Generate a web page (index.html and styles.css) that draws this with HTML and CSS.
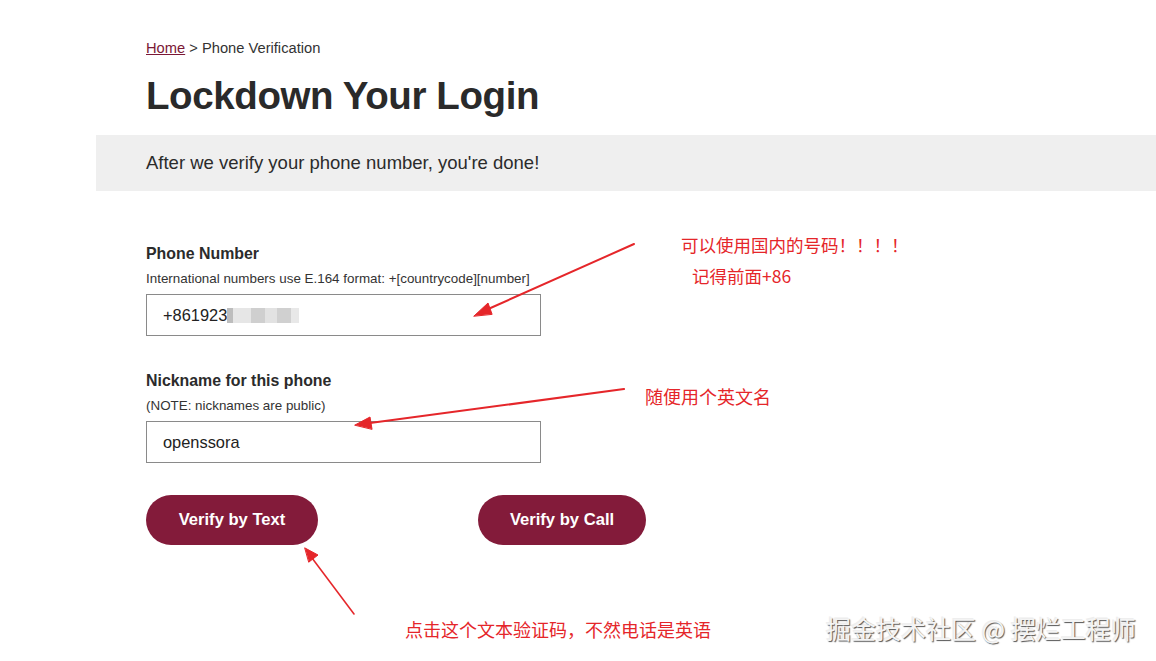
FILE: index.html
```html
<!DOCTYPE html>
<html lang="en">
<head>
<meta charset="utf-8">
<title>Lockdown Your Login</title>
<link rel="stylesheet" href="styles.css">
</head>
<body>
<div class="page">
  <header class="head">
    <nav class="crumbs"><a href="#">Home</a> &gt; Phone Verification</nav>
    <h1 class="title">Lockdown Your Login</h1>
  </header>
  <div class="banner">After we verify your phone number, you're done!</div>
  <form class="form">
    <div class="field">
      <label class="label">Phone Number</label>
      <div class="hint">International numbers use E.164 format: +[countrycode][number]</div>
      <div class="input">+861923<span class="blur"><i class="b1"></i><i class="b2"></i><i class="b3"></i><i class="b4"></i><i class="b5"></i><i class="b6"></i></span></div>
    </div>
    <div class="field field-nick">
      <label class="label">Nickname for this phone</label>
      <div class="hint">(NOTE: nicknames are public)</div>
      <div class="input">openssora</div>
    </div>
    <div class="actions">
      <button type="button" class="btn">Verify by Text</button>
      <button type="button" class="btn btn-call">Verify by Call</button>
    </div>
  </form>

  <svg class="arrows" width="1156" height="661" viewBox="0 0 1156 661">
    <g fill="#e5262a" stroke="#e5262a" stroke-linecap="round">
      <line x1="634" y1="244" x2="486" y2="310" stroke-width="2"/>
      <polygon points="474,316 488,303 492,314" stroke-width="1"/>
      <line x1="624" y1="389" x2="370" y2="423" stroke-width="2.2"/>
      <polygon points="355,425 370,417 372,429" stroke-width="1"/>
      <line x1="354" y1="614" x2="312" y2="558" stroke-width="1.6"/>
      <polygon points="305,548 318,555 309,562" stroke-width="1"/>
    </g>
  </svg>
  <div class="note note-1">可以使用国内的号码！！！！</div>
  <div class="note note-2">记得前面+86</div>
  <div class="note note-3">随便用个英文名</div>
  <div class="note note-4">点击这个文本验证码，不然电话是英语</div>
  <div class="mark">掘金技术社区 @ 摆烂工程师</div>
</div>
</body>
</html>
```

FILE: styles.css
```css
* { box-sizing: border-box; }
html, body { margin: 0; padding: 0; background: #fff; }
body {
  font-family: "Liberation Sans", Arial, "Noto Sans CJK SC", sans-serif;
  color: #2b2b2b;
}
.page {
  position: relative;
  width: 1156px;
  height: 661px;
  overflow: hidden;
  padding-left: 96px;
}
.head { padding: 40px 0 0 50px; }
.crumbs { font-size: 14.7px; line-height: 16px; color: #333; }
.crumbs a { color: #7b1836; text-decoration: underline; }
.title {
  margin: 18px 0 0;
  font-size: 38.5px;
  line-height: 44px;
  font-weight: 700;
  color: #2a2a2a;
  letter-spacing: -0.4px;
}
.banner {
  margin-top: 17px;
  height: 56px;
  background: #efefef;
  padding-left: 50px;
  font-size: 18.5px;
  line-height: 56px;
  color: #2b2b2b;
}
.form { padding: 54px 0 0 50px; }
.field { margin-bottom: 36px; }
.field-nick { margin-bottom: 32px; }
.label { display: block; font-size: 15.9px; font-weight: 700; line-height: 18px; color: #2b2b2b; }
.hint { margin-top: 8px; font-size: 13.4px; line-height: 16px; color: #333; }
.input {
  margin-top: 7px;
  width: 395px;
  height: 42px;
  border: 1px solid #8a8a8a;
  padding-left: 16px;
  font-size: 16.4px;
  line-height: 40px;
  color: #222;
  display: flex;
  align-items: center;
}
.blur { display: inline-flex; align-items: center; height: 39px; }
.blur i { display: inline-block; height: 15px; background: #d4d4d4; }
.blur .b1 { width: 6px; background: #bdbdbd; }
.blur .b2 { width: 18px; background: #e6e6e6; }
.blur .b3 { width: 14px; background: #cfcfcf; }
.blur .b4 { width: 12px; background: #e2e2e2; }
.blur .b5 { width: 14px; background: #d0d0d0; }
.blur .b6 { width: 8px; background: #e8e8e8; }
.actions { display: flex; gap: 160px; }
.btn {
  width: 172px;
  height: 50px;
  border: 0;
  border-radius: 25px;
  background: #831b3a;
  color: #fff;
  font-family: "Liberation Sans", Arial, sans-serif;
  font-size: 16.6px;
  font-weight: 700;
  padding: 0;
}
.btn-call { width: 168px; }
.arrows { position: absolute; left: 0; top: 0; pointer-events: none; }
.note {
  position: absolute;
  color: #e5262a;
  font-family: "Noto Sans CJK SC", sans-serif;
  font-size: 17.5px;
  line-height: 22px;
  white-space: nowrap;
}
.note-1 { left: 681px; top: 234px; }
.note-2 { left: 692px; top: 265px; }
.note-3 { left: 645px; top: 385px; font-size: 18px; }
.note-4 { left: 405px; top: 618px; font-size: 18px; }
.mark {
  position: absolute;
  left: 826px;
  top: 612px;
  font-family: "Noto Sans CJK SC", sans-serif;
  font-size: 25px;
  line-height: 32px;
  color: #f4f4f4;
  text-shadow: 1px 1px 1px #555, -1px -1px 0 #eee;
  white-space: nowrap;
}
```
